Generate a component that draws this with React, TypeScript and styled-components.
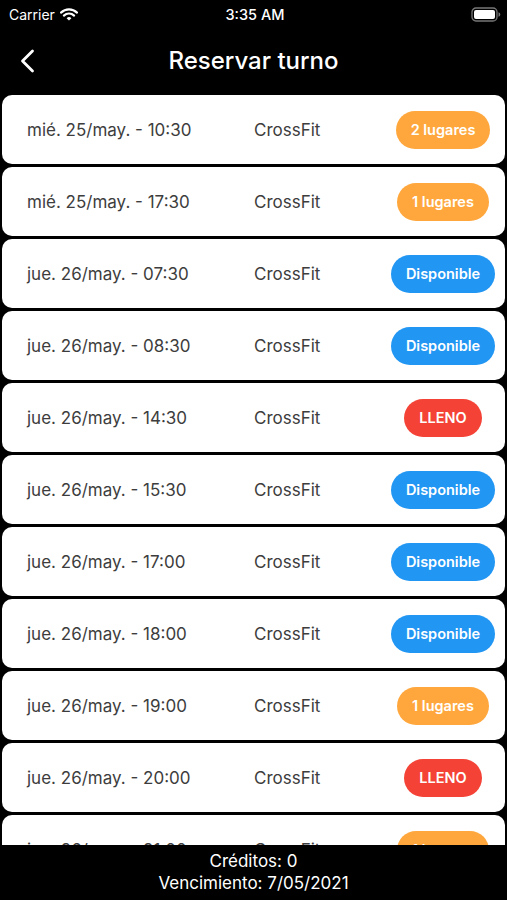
import React from 'react';
import styled, { createGlobalStyle } from 'styled-components';

type SlotStatus = 'few' | 'open' | 'full';

interface Slot {
    date: string;
    klass: string;
    status: SlotStatus;
    label: string;
}

const GlobalStyle = createGlobalStyle`
    html, body {
        margin: 0;
        padding: 0;
        background: #000;
    }
    body {
        font-family: Inter, 'Noto Sans', 'Liberation Sans', sans-serif;
        -webkit-font-smoothing: antialiased;
    }
`;

const badgeColors: Record<SlotStatus, string> = {
    few: '#ffa73d',
    open: '#2196f3',
    full: '#f44336',
};

const Screen = styled.div`
    background: #000;
    display: flex;
    flex-direction: column;
    height: 900px;
    overflow: hidden;
    width: 507px;
`;

const StatusBar = styled.div`
    align-items: center;
    color: #fff;
    display: grid;
    flex: 0 0 28px;
    grid-template-columns: 1fr auto 1fr;
    padding: 0 6px 0 9px;
`;

const Carrier = styled.div`
    align-items: center;
    display: flex;
    font-size: 14px;
    gap: 5px;
`;

const Clock = styled.div`
    font-size: 14.5px;
    font-weight: 500;
`;

const Battery = styled.div`
    justify-self: end;
    display: flex;
`;

const Header = styled.div`
    align-items: center;
    display: flex;
    flex: 0 0 67px;
    justify-content: center;
    position: relative;
`;

const BackButton = styled.button`
    background: none;
    border: none;
    cursor: pointer;
    display: flex;
    left: 16px;
    padding: 4px;
    position: absolute;
    top: 17px;
`;

const Title = styled.h1`
    color: #fff;
    font-size: 24px;
    font-weight: 500;
    margin: 0 0 2px;
`;

const List = styled.div`
    display: flex;
    flex: 1;
    flex-direction: column;
    gap: 3px;
    overflow: hidden;
    padding: 0 2px;
`;

const Card = styled.div`
    align-items: center;
    background: #fff;
    border-radius: 10px;
    display: grid;
    flex: 0 0 69px;
    grid-template-columns: 227px 1fr 106px;
    padding: 0 9px 0 25px;
`;

const SlotText = styled.span`
    color: #3d3d3d;
    font-size: 17px;
`;

const BadgeCell = styled.div`
    display: flex;
    justify-content: center;
`;

const Badge = styled.span<{ status: SlotStatus }>`
    align-items: center;
    background: ${props => badgeColors[props.status]};
    border-radius: 19px;
    color: #fff;
    display: flex;
    font-size: 14.5px;
    font-weight: 600;
    height: 38px;
    padding: 0 15px;
`;

const Footer = styled.div`
    box-sizing: border-box;
    color: #fff;
    flex: 0 0 55px;
    font-size: 17px;
    line-height: 22px;
    padding-top: 5px;
    text-align: center;
`;

const slots: Slot[] = [
    { date: 'mié. 25/may. - 10:30', klass: 'CrossFit', status: 'few', label: '2 lugares' },
    { date: 'mié. 25/may. - 17:30', klass: 'CrossFit', status: 'few', label: '1 lugares' },
    { date: 'jue. 26/may. - 07:30', klass: 'CrossFit', status: 'open', label: 'Disponible' },
    { date: 'jue. 26/may. - 08:30', klass: 'CrossFit', status: 'open', label: 'Disponible' },
    { date: 'jue. 26/may. - 14:30', klass: 'CrossFit', status: 'full', label: 'LLENO' },
    { date: 'jue. 26/may. - 15:30', klass: 'CrossFit', status: 'open', label: 'Disponible' },
    { date: 'jue. 26/may. - 17:00', klass: 'CrossFit', status: 'open', label: 'Disponible' },
    { date: 'jue. 26/may. - 18:00', klass: 'CrossFit', status: 'open', label: 'Disponible' },
    { date: 'jue. 26/may. - 19:00', klass: 'CrossFit', status: 'few', label: '1 lugares' },
    { date: 'jue. 26/may. - 20:00', klass: 'CrossFit', status: 'full', label: 'LLENO' },
    { date: 'jue. 26/may. - 21:00', klass: 'CrossFit', status: 'few', label: '1 lugares' },
];

const WifiIcon = () => (
    <svg width="18" height="13" viewBox="0 0 18 13">
        <path d="M1 4.6 A11.5 11.5 0 0 1 17 4.6" stroke="#fff" strokeWidth="2.2" fill="none" strokeLinecap="round" />
        <path d="M3.9 7.6 A7.3 7.3 0 0 1 14.1 7.6" stroke="#fff" strokeWidth="2.2" fill="none" strokeLinecap="round" />
        <path d="M9 12.6 L6.6 10.2 A3.4 3.4 0 0 1 11.4 10.2 Z" fill="#fff" />
    </svg>
);

const BatteryIcon = () => (
    <svg width="30" height="15" viewBox="0 0 30 15">
        <rect x="1" y="1" width="25" height="13" rx="4" fill="none" stroke="#777" strokeWidth="1.3" />
        <rect x="3" y="3" width="21" height="9" rx="2" fill="#fff" />
        <path d="M27.5 5.2 Q29.3 5.6 29.3 7.5 Q29.3 9.4 27.5 9.8 Z" fill="#777" />
    </svg>
);

const ChevronLeft = () => (
    <svg width="16" height="24" viewBox="0 0 16 24">
        <path d="M12.5 2 L2.5 12 L12.5 22" stroke="#fff" strokeWidth="2.8" fill="none" strokeLinecap="round" strokeLinejoin="round" />
    </svg>
);

const App = () => {
    return (
        <Screen>
            <GlobalStyle />
            <StatusBar>
                <Carrier>
                    Carrier
                    <WifiIcon />
                </Carrier>
                <Clock>3:35 AM</Clock>
                <Battery>
                    <BatteryIcon />
                </Battery>
            </StatusBar>
            <Header>
                <BackButton aria-label="Volver">
                    <ChevronLeft />
                </BackButton>
                <Title>Reservar turno</Title>
            </Header>
            <List>
                {slots.map(slot => (
                    <Card key={slot.date}>
                        <SlotText>{slot.date}</SlotText>
                        <SlotText>{slot.klass}</SlotText>
                        <BadgeCell>
                            <Badge status={slot.status}>{slot.label}</Badge>
                        </BadgeCell>
                    </Card>
                ))}
            </List>
            <Footer>
                Créditos: 0
                <br />
                Vencimiento: 7/05/2021
            </Footer>
        </Screen>
    );
};

export default App;
